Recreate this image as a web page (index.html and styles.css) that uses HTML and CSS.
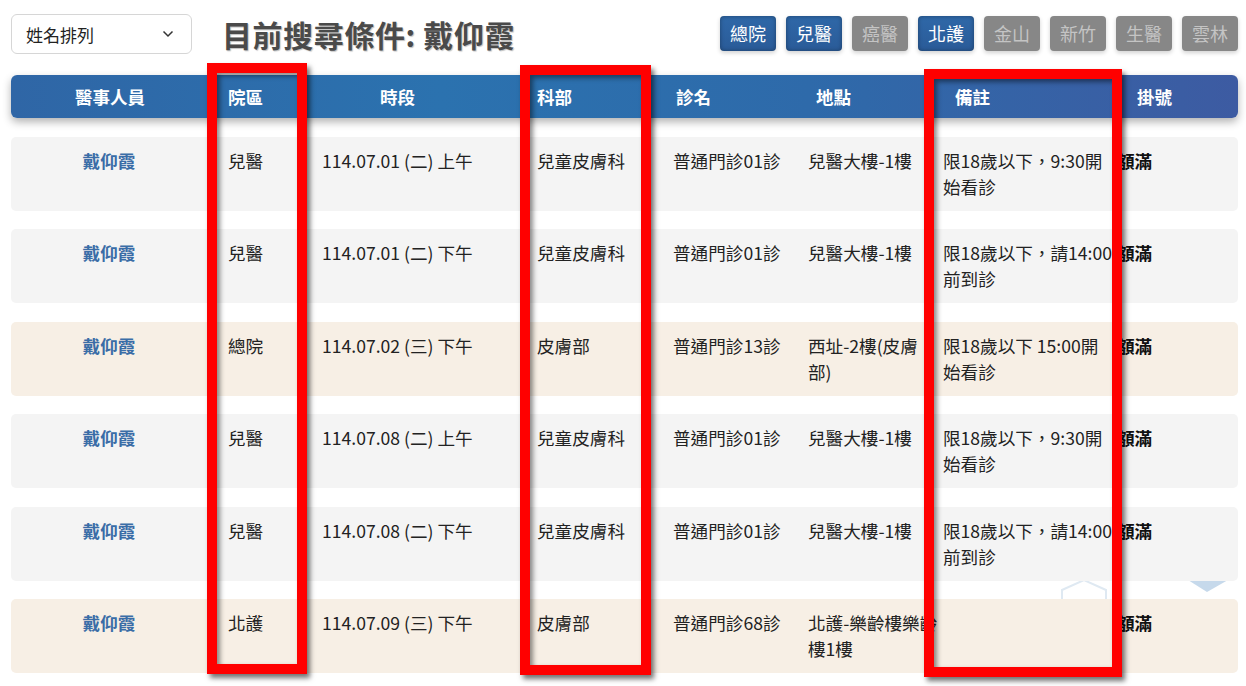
FILE: index.html
```html
<!DOCTYPE html>
<html lang="zh-Hant">
<head>
<meta charset="utf-8">
<title>門診查詢</title>
<link rel="stylesheet" href="styles.css">
</head>
<body>
<div class="page">
  <div class="topbar">
    <div class="select">
      <span>姓名排列</span>
      <svg class="chev" width="12" height="8" viewBox="0 0 12 8"><path d="M1.5 1.5 L6 6 L10.5 1.5" fill="none" stroke="#333" stroke-width="1.5"/></svg>
    </div>
    <h1 class="title">目前搜尋條件: 戴仰霞</h1>
    <div class="branches">
      <span class="btn on">總院</span>
      <span class="btn on">兒醫</span>
      <span class="btn off">癌醫</span>
      <span class="btn on">北護</span>
      <span class="btn off">金山</span>
      <span class="btn off">新竹</span>
      <span class="btn off">生醫</span>
      <span class="btn off">雲林</span>
    </div>
  </div>

  <div class="table">
    <div class="head">
      <div class="h h1">醫事人員</div>
      <div class="h h2">院區</div>
      <div class="h h3">時段</div>
      <div class="h h4">科部</div>
      <div class="h h5">診名</div>
      <div class="h h6">地點</div>
      <div class="h h7">備註</div>
      <div class="h h8">掛號</div>
    </div>

    <div class="rows">
      <div class="row gray">
        <div class="c name">戴仰霞</div><div class="c">兒醫</div><div class="c">114.07.01 (二) 上午</div><div class="c">兒童皮膚科</div><div class="c">普通門診01診</div><div class="c loc">兒醫大樓-1樓</div><div class="c note">限18歲以下，9:30開始看診</div><div class="c full">額滿</div>
      </div>
      <div class="row gray">
        <div class="c name">戴仰霞</div><div class="c">兒醫</div><div class="c">114.07.01 (二) 下午</div><div class="c">兒童皮膚科</div><div class="c">普通門診01診</div><div class="c loc">兒醫大樓-1樓</div><div class="c note">限18歲以下，請14:00前到診</div><div class="c full">額滿</div>
      </div>
      <div class="row beige">
        <div class="c name">戴仰霞</div><div class="c">總院</div><div class="c">114.07.02 (三) 下午</div><div class="c">皮膚部</div><div class="c">普通門診13診</div><div class="c loc">西址-2樓(皮膚部)</div><div class="c note">限18歲以下 15:00開始看診</div><div class="c full">額滿</div>
      </div>
      <div class="row gray">
        <div class="c name">戴仰霞</div><div class="c">兒醫</div><div class="c">114.07.08 (二) 上午</div><div class="c">兒童皮膚科</div><div class="c">普通門診01診</div><div class="c loc">兒醫大樓-1樓</div><div class="c note">限18歲以下，9:30開始看診</div><div class="c full">額滿</div>
      </div>
      <div class="row gray">
        <div class="c name">戴仰霞</div><div class="c">兒醫</div><div class="c">114.07.08 (二) 下午</div><div class="c">兒童皮膚科</div><div class="c">普通門診01診</div><div class="c loc">兒醫大樓-1樓</div><div class="c note">限18歲以下，請14:00前到診</div><div class="c full">額滿</div>
      </div>
      <div class="row beige">
        <div class="c name">戴仰霞</div><div class="c">北護</div><div class="c">114.07.09 (三) 下午</div><div class="c">皮膚部</div><div class="c">普通門診68診</div><div class="c loc">北護-樂齡樓樂齡樓1樓</div><div class="c note"></div><div class="c full">額滿</div>
      </div>
    </div>
  </div>

  <svg class="deco hex" width="48" height="24" viewBox="0 0 48 24"><path d="M2 24 V12 L24 2 L46 12 V24" fill="none" stroke="#dfe9f2" stroke-width="2"/></svg>
  <svg class="deco tri" width="40" height="12" viewBox="0 0 40 12"><path d="M0 0 H40 L19 12 Z" fill="#c6d9eb"/></svg>

  <div class="mark m1"></div>
  <div class="mark m2"></div>
  <div class="mark m3"></div>
</div>
</body>
</html>
```

FILE: styles.css
```css
html, body {
  margin: 0;
  padding: 0;
  background: #ffffff;
}
body {
  font-family: "Noto Sans CJK TC", "Noto Sans", sans-serif;
  color: #222;
}
.page {
  position: relative;
  width: 1246px;
  height: 686px;
  box-sizing: border-box;
  padding: 14px 8px 0 11px;
  overflow: hidden;
}
.topbar {
  display: flex;
  align-items: center;
  height: 40px;
}
.select {
  width: 181px;
  height: 40px;
  box-sizing: border-box;
  border: 1px solid #d6d6d6;
  border-radius: 6px;
  display: flex;
  align-items: center;
  justify-content: space-between;
  padding: 0 17px 0 14px;
  font-size: 17px;
  color: #222;
}
.chev { display: block; }
.title {
  margin: 0 0 0 30px;
  font-size: 30px;
  font-weight: 700;
  color: #4a4a4a;
  text-shadow: 1px 1px 1px rgba(0,0,0,0.25);
  line-height: 40px;
  letter-spacing: 0.6px;
}
.branches {
  margin-left: auto;
  display: flex;
  gap: 10px;
  align-self: flex-start;
  margin-top: 2px;
}
.btn {
  display: block;
  height: 35px;
  line-height: 35px;
  padding: 0 10px;
  border-radius: 4px;
  font-size: 18px;
  box-shadow: 0 2px 4px rgba(0,0,0,0.18);
}
.btn.on {
  background: linear-gradient(180deg, #2f68a8 0%, #2a5b98 100%);
  color: #fff;
  box-shadow: inset 0 0 4px rgba(0,0,0,0.35), 0 2px 4px rgba(0,0,0,0.18);
}
.btn.off {
  background: #878787;
  color: #c4c4c4;
}

.table { margin-top: 21px; }
.head, .row {
  display: grid;
  grid-template-columns: 217px 94px 215px 136px 135px 135px 174px 121px;
}
.head {
  height: 43px;
  align-items: center;
  border-radius: 6px;
  background: linear-gradient(90deg, #2f66a6 0%, #2b72af 35%, #2e6aaa 65%, #3d5ba2 100%);
  box-shadow: 0 4px 8px rgba(0,0,0,0.3);
  color: #fff;
  font-size: 17.5px;
  font-weight: 700;
}
.h { white-space: nowrap; }
.h1 { padding-left: 64px; }
.h2 { padding-left: 0; }
.h3 { padding-left: 58px; }
.h4 { padding-left: 0; }
.h5 { padding-left: 3px; }
.h6 { padding-left: 8px; }
.h7 { padding-left: 12px; }
.h8 { padding-left: 20px; }

.rows {
  margin-top: 19px;
  display: flex;
  flex-direction: column;
  gap: 18.4px;
  position: relative;
  z-index: 1;
}
.row {
  height: 74px;
  box-sizing: border-box;
  padding: 11px 0;
  border-radius: 5px;
  font-size: 17.6px;
  line-height: 26px;
}
.row.gray { background: #f4f4f4; }
.row.beige { background: #f7efe5; }
.c { overflow-wrap: anywhere; }
.name {
  text-align: center;
  padding-right: 21px;
  font-weight: 700;
  color: #3a6da7;
}
.loc { padding-right: 3px; }
.note { padding-right: 3px; }
.full { font-weight: 700; color: #111; }

.deco { position: absolute; z-index: 0; }
.hex { left: 1060px; top: 578px; }
.tri { left: 1188px; top: 580px; }

.mark {
  position: absolute;
  z-index: 5;
  box-sizing: border-box;
  border: 10px solid #ff0000;
  box-shadow: 3px 4px 5px rgba(0,0,0,0.55), inset 3px 3px 5px rgba(0,0,0,0.45);
}
.m1 { left: 207px; top: 63px; width: 100px; height: 611px; }
.m2 { left: 520px; top: 65px; width: 131px; height: 610px; }
.m3 { left: 924px; top: 69px; width: 198px; height: 608px; }
```
